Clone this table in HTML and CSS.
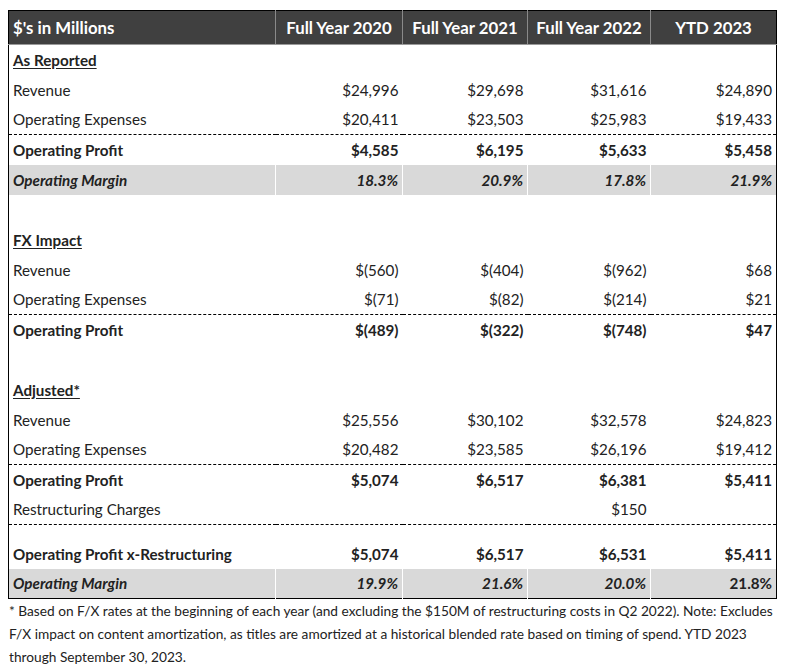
FILE: index.html
```html
<!DOCTYPE html>
<html>

<head>
    <meta charset="utf-8">
    <title>Operating Profit</title>
    <link rel="stylesheet" href="styles.css">
</head>

<body>
    <table class="results">
        <thead>
            <tr>
                <th class="label">$'s in Millions</th>
                <th>Full Year 2020</th>
                <th>Full Year 2021</th>
                <th>Full Year 2022</th>
                <th>YTD 2023</th>
            </tr>
        </thead>
        <tbody>
            <tr class="section">
                <td colspan="5"><span>As Reported</span></td>
            </tr>
            <tr>
                <td>Revenue</td>
                <td>$24,996</td>
                <td>$29,698</td>
                <td>$31,616</td>
                <td>$24,890</td>
            </tr>
            <tr class="dashed">
                <td>Operating Expenses</td>
                <td>$20,411</td>
                <td>$23,503</td>
                <td>$25,983</td>
                <td>$19,433</td>
            </tr>
            <tr class="total">
                <td>Operating Profit</td>
                <td>$4,585</td>
                <td>$6,195</td>
                <td>$5,633</td>
                <td>$5,458</td>
            </tr>
            <tr class="margin">
                <td>Operating Margin</td>
                <td>18.3%</td>
                <td>20.9%</td>
                <td>17.8%</td>
                <td>21.9%</td>
            </tr>
            <tr class="spacer">
                <td colspan="5"></td>
            </tr>
            <tr class="section">
                <td colspan="5"><span>FX Impact</span></td>
            </tr>
            <tr>
                <td>Revenue</td>
                <td>$(560)</td>
                <td>$(404)</td>
                <td>$(962)</td>
                <td>$68</td>
            </tr>
            <tr class="dashed">
                <td>Operating Expenses</td>
                <td>$(71)</td>
                <td>$(82)</td>
                <td>$(214)</td>
                <td>$21</td>
            </tr>
            <tr class="total">
                <td>Operating Profit</td>
                <td>$(489)</td>
                <td>$(322)</td>
                <td>$(748)</td>
                <td>$47</td>
            </tr>
            <tr class="spacer">
                <td colspan="5"></td>
            </tr>
            <tr class="section">
                <td colspan="5"><span>Adjusted*</span></td>
            </tr>
            <tr>
                <td>Revenue</td>
                <td>$25,556</td>
                <td>$30,102</td>
                <td>$32,578</td>
                <td>$24,823</td>
            </tr>
            <tr class="dashed">
                <td>Operating Expenses</td>
                <td>$20,482</td>
                <td>$23,585</td>
                <td>$26,196</td>
                <td>$19,412</td>
            </tr>
            <tr class="total">
                <td>Operating Profit</td>
                <td>$5,074</td>
                <td>$6,517</td>
                <td>$6,381</td>
                <td>$5,411</td>
            </tr>
            <tr class="dashed">
                <td>Restructuring Charges</td>
                <td></td>
                <td></td>
                <td>$150</td>
                <td></td>
            </tr>
            <tr class="spacer small">
                <td colspan="5"></td>
            </tr>
            <tr class="total">
                <td>Operating Profit x-Restructuring</td>
                <td>$5,074</td>
                <td>$6,517</td>
                <td>$6,531</td>
                <td>$5,411</td>
            </tr>
            <tr class="margin">
                <td>Operating Margin</td>
                <td>19.9%</td>
                <td>21.6%</td>
                <td>20.0%</td>
                <td class="upright">21.8%</td>
            </tr>
        </tbody>
    </table>
    <p class="note">* Based on F/X rates at the beginning of each year (and excluding the $150M of restructuring costs in Q2 2022). Note: Excludes F/X impact on content amortization, as titles are amortized at a historical blended rate based on timing of spend. YTD 2023 through September 30, 2023.</p>
</body>

</html>
```

FILE: styles.css
```css
* {
    box-sizing: border-box;
}

body {
    margin: 0;
    padding: 10px 8px 0 8px;
    font-family: Lato, "Noto Sans", sans-serif;
    font-size: 15.2px;
    color: #222;
    background: #fff;
}

.results {
    width: 769px;
    border-collapse: collapse;
    border: 1px solid #000;
    table-layout: fixed;
}

.results th {
    height: 34px;
    background-color: #404040;
    color: #fff;
    font-weight: bold;
    font-size: 16.8px;
    text-align: center;
    padding: 0 4px;
    border-left: 1px solid #8a8a8a;
    border-bottom: 1px solid #9a9a9a;
}

.results th.label {
    width: 267px;
    text-align: left;
    border-left: 1px solid #000;
}

.results th:nth-child(2) {
    width: 127px;
}

.results th:nth-child(3) {
    width: 125px;
}

.results th:nth-child(4) {
    width: 123px;
}

.results td {
    height: 30px;
    padding: 0 4px;
    text-align: right;
    white-space: nowrap;
}

.results td:first-child {
    text-align: left;
}

.results .section td span {
    font-weight: bold;
    text-decoration: underline;
    text-underline-offset: 2px;
}

.results tr.dashed td {
    border-bottom: 1px dashed #000;
}

.results .total td {
    font-weight: bold;
}

.results .margin td {
    background-color: #d9d9d9;
    font-weight: bold;
    font-style: italic;
}

.results .margin td + td {
    border-left: 1px solid #fff;
}

.results .margin td.upright {
    font-style: normal;
}

.results .spacer.small td {
    height: 14px;
}

.note {
    margin: 0;
    font-size: 13.7px;
    line-height: 23px;
    color: #222;
    padding-left: 1px;
}
```
